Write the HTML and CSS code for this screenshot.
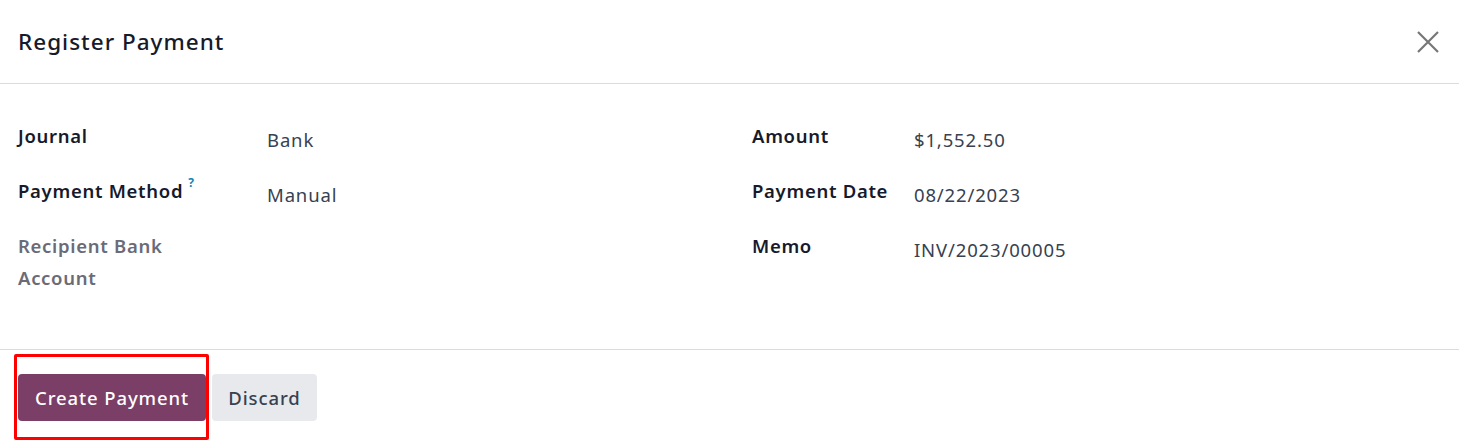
FILE: index.html
```html
<!DOCTYPE html>
<html>
<head>
<meta charset="utf-8">
<link rel="stylesheet" href="styles.css">
</head>
<body>
<div class="dialog">
  <header class="head">
    <h1 class="title">Register Payment</h1>
    <button class="close" aria-label="Close">
      <svg width="22" height="22" viewBox="0 0 22 22"><path d="M1 1L21 21M21 1L1 21" stroke="#777" stroke-width="2.2" fill="none"/></svg>
    </button>
  </header>
  <main class="body">
    <div class="group left">
      <div class="row"><div class="label">Journal</div><div class="value">Bank</div></div>
      <div class="row"><div class="label">Payment Method<sup class="help">?</sup></div><div class="value">Manual</div></div>
      <div class="row"><div class="label muted">Recipient Bank<br>Account</div><div class="value"></div></div>
    </div>
    <div class="group right">
      <div class="row"><div class="label">Amount</div><div class="value">$1,552.50</div></div>
      <div class="row"><div class="label">Payment Date</div><div class="value">08/22/2023</div></div>
      <div class="row"><div class="label">Memo</div><div class="value">INV/2023/00005</div></div>
    </div>
  </main>
  <footer class="foot">
    <div class="highlight-wrap">
      <button class="btn primary">Create Payment</button>
      <span class="highlight"></span>
    </div>
    <button class="btn secondary">Discard</button>
  </footer>
</div>
</body>
</html>
```
FILE: styles.css
```css
html, body { margin: 0; padding: 0; background: #fff; }
body { font-family: "Noto Sans", "Open Sans", sans-serif; color: #1f2937; }
.dialog { width: 1459px; min-height: 443px; }
.head {
  height: 84px; box-sizing: border-box;
  border-bottom: 1px solid #dcdcdc;
  display: flex; align-items: center; justify-content: space-between;
  padding: 0 20px 0 18px;
}
.title { margin: 0; font-size: 22.5px; font-weight: 500; color: #161a2b; letter-spacing: 1px; }
.close { background: none; border: 0; padding: 0; width: 22px; height: 22px; display: flex; }
.body {
  display: grid; grid-template-columns: 734px 1fr;
  padding: 42px 18px 0 18px; height: 266px; box-sizing: border-box;
  border-bottom: 1px solid #dcdcdc;
}
.row { display: flex; min-height: 55px; }
.left .label { width: 249px; }
.right .label { width: 162px; }
.label { font-size: 18.5px; font-weight: 600; color: #161a2b; line-height: 32px; margin-top: -6px; letter-spacing: 0.7px; }
.label.muted { color: #6b6b78; }
.help { color: #0e86b7; font-size: 12px; font-weight: 700; margin-left: 5px; vertical-align: top; position: relative; top: -8px; }
.value { font-size: 18.5px; color: #374151; line-height: 32px; margin-top: -2px; letter-spacing: 0.85px; }
.foot { display: flex; gap: 6px; padding: 24px 18px 22px 18px; }
.highlight-wrap { position: relative; }
.highlight {
  position: absolute; left: -4px; top: -20px; right: -3px; bottom: -19px;
  border: 3px solid #ff0000; border-radius: 2px; pointer-events: none;
}
.btn {
  font-family: inherit; font-size: 18.5px; font-weight: 500; border: 0; border-radius: 4px;
  height: 47px; padding: 0; cursor: pointer; letter-spacing: 0.9px;
}
.primary { background: #7a3e67; color: #fff; width: 188px; }
.secondary { background: #e7e9ed; color: #374151; width: 105px; }
```
